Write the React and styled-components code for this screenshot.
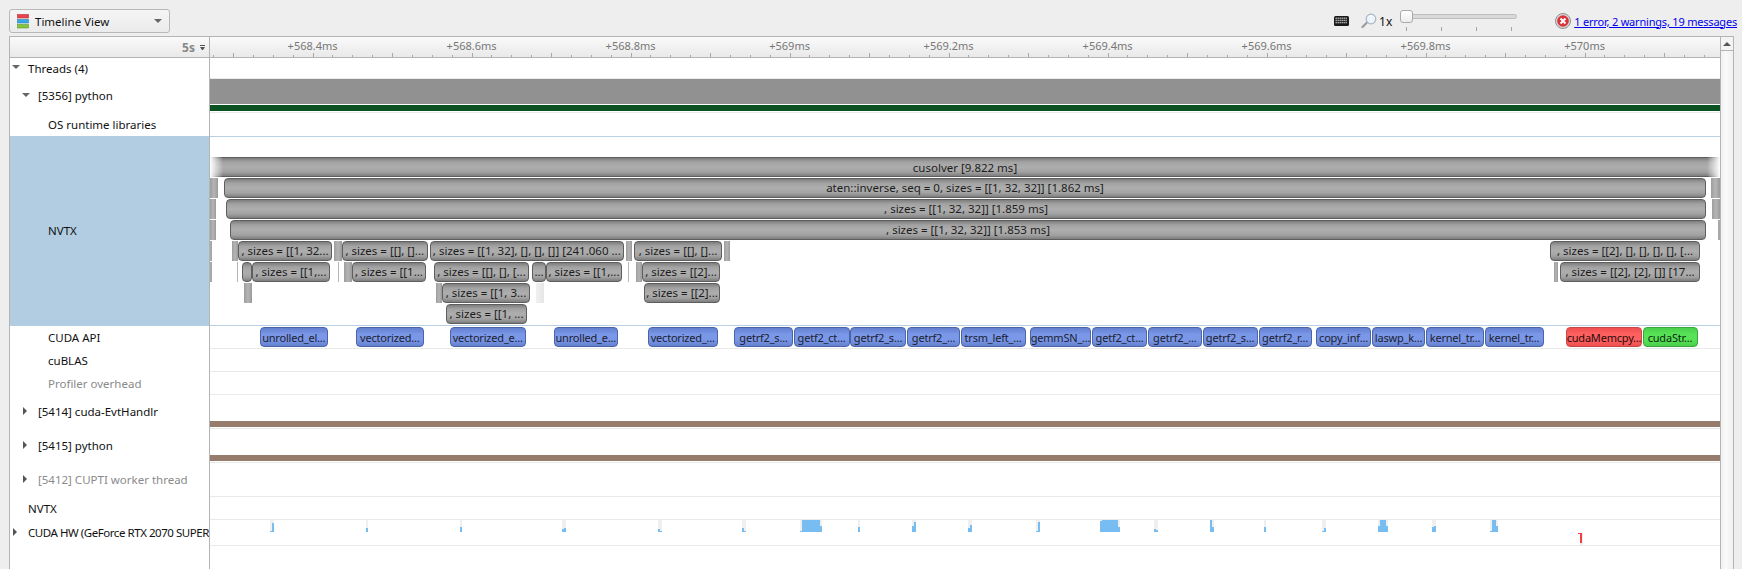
import React from "react";
import styled, { createGlobalStyle } from "styled-components";

const Global = createGlobalStyle`
  html, body { margin: 0; padding: 0; height: 100%; background: #eeeeee; overflow: hidden; }
  body { font-family: "Noto Sans", "Open Sans", sans-serif; font-size: 11.5px; color: #111; }
`;

const Page = styled.div`
  display: flex;
  flex-direction: column;
  width: 1742px;
  height: 569px;
  overflow: hidden;
`;

const Toolbar = styled.div`
  display: flex;
  align-items: flex-start;
  height: 36px;
  padding: 9px 5px 0 9px;
  box-sizing: border-box;
  flex: none;
`;

const Dropdown = styled.div`
  display: flex;
  align-items: center;
  width: 161px;
  height: 24px;
  box-sizing: border-box;
  padding: 0 7px;
  border: 1px solid #b9b9b9;
  border-radius: 3px;
  background: linear-gradient(#f5f5f5, #ebebeb);
`;

const DropText = styled.span`
  margin-left: 6px;
  flex: 1;
  font-size: 11.5px;
`;

const DownTri = styled.span`
  width: 0;
  height: 0;
  border-left: 4px solid transparent;
  border-right: 4px solid transparent;
  border-top: 4px solid #666;
`;

const RightTools = styled.div`
  display: flex;
  align-items: center;
  margin-left: auto;
  height: 24px;
`;

const ZoomLabel = styled.span`
  margin: 0 8px 0 2px;
  font-size: 12px;
  color: #111;
`;

const Slider = styled.div`
  position: relative;
  width: 117px;
  height: 24px;
  margin-right: 38px;
`;

const SliderTrack = styled.div`
  position: absolute;
  left: 0;
  right: 0;
  top: 5px;
  height: 5px;
  border: 1px solid #bdbdbd;
  border-radius: 3px;
  background: #d9d9d9;
  box-sizing: border-box;
`;

const SliderThumb = styled.div`
  position: absolute;
  left: 0;
  top: 1px;
  width: 13px;
  height: 13px;
  box-sizing: border-box;
  border: 1px solid #aaa;
  border-radius: 3px;
  background: linear-gradient(#fff, #ececec);
`;

const SliderTicks = styled.svg`
  position: absolute;
  left: 0;
  top: 18px;
`;

const MessageLink = styled.a`
  margin-left: 3px;
  color: #0000ee;
  text-decoration: underline;
  font-size: 11px;
  letter-spacing: -0.2px;
  white-space: nowrap;
`;

const Panel = styled.div`
  display: flex;
  flex: 1;
  width: 1725px;
  margin-left: 9px;
  box-sizing: border-box;
  border-left: 1px solid #b4b4b4;
  border-top: 1px solid #b4b4b4;
  min-height: 0;
`;

const Main = styled.div`
  display: flex;
  flex-direction: column;
  flex: 1;
  min-width: 0;
`;

const Scrollbar = styled.div`
  width: 14px;
  box-sizing: border-box;
  flex: none;
  border-left: 1px solid #b4b4b4;
  border-right: 1px solid #b4b4b4;
  background: linear-gradient(90deg, #f0f0f0, #fafafa 40%, #f0f0f0);
`;

const ScrollUp = styled.div`
  display: flex;
  align-items: center;
  justify-content: center;
  height: 14px;
  box-sizing: border-box;
  border-bottom: 1px solid #b4b4b4;
  background: #f4f4f4;
  &::before {
    content: "";
    border-left: 4px solid transparent;
    border-right: 4px solid transparent;
    border-bottom: 4px solid #555;
  }
`;

const Row = styled.div`
  display: flex;
  height: ${(p) => p.$h}px;
  flex: none;
`;

const FillRow = styled(Row)`
  height: auto;
  flex: 1;
`;

const Corner = styled.div`
  display: flex;
  align-items: center;
  justify-content: flex-end;
  width: 200px;
  flex: none;
  box-sizing: border-box;
  padding: 0 4px 0 0;
  border-right: 1px solid #b4b4b4;
  border-bottom: 1px solid #b4b4b4;
  background: linear-gradient(#fafafa, #e9e9e9);
  font-weight: 700;
  color: #888;
  font-size: 12px;
`;

const SortGlyph = styled.span`
  display: inline-flex;
  flex-direction: column;
  margin-left: 5px;
  gap: 1px;
  &::before {
    content: "";
    width: 5px;
    height: 1px;
    background: #555;
  }
  &::after {
    content: "";
    border-left: 2.5px solid transparent;
    border-right: 2.5px solid transparent;
    border-top: 3px solid #555;
  }
`;

const Ruler = styled.div`
  position: relative;
  flex: 1;
  border-bottom: 1px solid #b4b4b4;
  background: linear-gradient(#fafafa, #e9e9e9);
`;

const RulerLabel = styled.span.attrs((p) => ({ style: { left: p.$x } }))`
  position: absolute;
  top: 1px;
  transform: translateX(-50%);
  color: #777;
  font-size: 11px;
  white-space: nowrap;
`;

const RulerTicks = styled.svg`
  position: absolute;
  left: 0;
  bottom: 0;
`;

const Label = styled.div`
  display: flex;
  align-items: center;
  width: 200px;
  flex: none;
  box-sizing: border-box;
  padding: 0 0 1px ${(p) => p.$pad}px;
  border-right: 1px solid #b4b4b4;
  background: ${(p) => (p.$selected ? "#b2cce2" : "#fff")};
  color: ${(p) => (p.$muted ? "#8a8a8a" : "#111")};
  letter-spacing: ${(p) => (p.$tight ? "-0.45px" : "0")};
  white-space: nowrap;
  overflow: hidden;
`;

const CaretBox = styled.span`
  display: flex;
  align-items: center;
  width: 16px;
  flex: none;
  margin-top: -2px;
`;

const CaretDown = styled.span`
  width: 0;
  height: 0;
  border-left: 4px solid transparent;
  border-right: 4px solid transparent;
  border-top: 4px solid #666;
`;

const CaretRight = styled.span`
  width: 0;
  height: 0;
  margin-left: 1px;
  border-top: 4px solid transparent;
  border-bottom: 4px solid transparent;
  border-left: 4px solid #555;
`;

const Track = styled.div`
  position: relative;
  flex: 1;
  display: flex;
  flex-direction: column;
  box-sizing: border-box;
  background: #fff;
  border-bottom: 1px solid ${(p) => p.$line || "#e9e9e9"};
`;

const NvtxTrack = styled(Track)`
  border-top: 1px solid #b9cfe2;
`;

const PlainTrack = styled.div`
  flex: 1;
  background: #fff;
`;

const UsageBar = styled.div`
  height: 25px;
  background: #919191;
  flex: none;
`;

const GreenBar = styled.div`
  height: 6px;
  margin-top: 1px;
  background: #0b5323;
  flex: none;
`;

const BrownBar = styled.div`
  height: 6px;
  margin-top: auto;
  margin-bottom: 1px;
  background: #957c6d;
  flex: none;
`;

const barBase = `
  position: absolute;
  height: 20px;
  box-sizing: border-box;
  display: flex;
  align-items: center;
  justify-content: center;
  overflow: hidden;
  white-space: nowrap;
  font-size: 11.5px;
  line-height: 1;
`;

const place = (p) => ({
  style: { left: p.$x - 210, width: p.$w, top: p.$top },
});

const GreyBar = styled.div.attrs(place)`
  ${barBase}
  border: 1px solid #5e5e5e;
  border-radius: 4px;
  color: #1c1c1c;
  background: linear-gradient(#7d7d7d, #a2a2a2 22%, #aeaeae 50%, #a2a2a2 78%, #7d7d7d);
`;

const Stub = styled.div.attrs(place)`
  position: absolute;
  height: 20px;
  background: ${(p) =>
    p.$pale
      ? "linear-gradient(90deg, #f0f0f0, #e6e6e6)"
      : "linear-gradient(90deg, #9d9d9d, #b5b5b5 50%, #9a9a9a)"};
`;

const RootBar = styled.div`
  position: absolute;
  left: 0;
  right: 0;
  top: 20px;
  height: 20px;
  box-sizing: border-box;
  display: flex;
  align-items: center;
  justify-content: center;
  font-size: 11.5px;
  color: #1c1c1c;
  border-top: 1px solid #5e5e5e;
  border-bottom: 1px solid #5e5e5e;
  background: linear-gradient(#7d7d7d, #a2a2a2 22%, #aeaeae 50%, #a2a2a2 78%, #7d7d7d);
  &::before,
  &::after {
    content: "";
    position: absolute;
    top: -1px;
    bottom: -1px;
    width: 13px;
  }
  &::before {
    left: 0;
    background: linear-gradient(90deg, #fff, rgba(255, 255, 255, 0));
  }
  &::after {
    right: 0;
    background: linear-gradient(270deg, #fff, rgba(255, 255, 255, 0));
  }
`;

const palettes = {
  blue: { b: "#4a64a8", c: "#7a97e8", e: "#6480cf", t: "#1c2230" },
  red: { b: "#c54848", c: "#ff6060", e: "#f04f4f", t: "#2a0b0b" },
  green: { b: "#3da43d", c: "#58e258", e: "#4acf4a", t: "#0c2a0c" },
};

const ApiBar = styled.div.attrs(place)`
  ${barBase}
  font-size: 11px;
  letter-spacing: -0.2px;
  border: 1px solid ${(p) => palettes[p.$kind].b};
  border-radius: 4px;
  color: ${(p) => palettes[p.$kind].t};
  background: linear-gradient(
    ${(p) => palettes[p.$kind].e},
    ${(p) => palettes[p.$kind].c} 35%,
    ${(p) => palettes[p.$kind].c} 65%,
    ${(p) => palettes[p.$kind].e}
  );
`;

const Sparks = styled.svg`
  position: absolute;
  left: 0;
  top: 0;
`;

const StackIcon = () => (
  <svg width="12" height="15" viewBox="0 0 12 15">
    <rect x="0.5" y="0.5" width="11" height="3.5" fill="#e8434f" stroke="#b5303a" strokeWidth="0.6" />
    <rect x="0.5" y="5.5" width="11" height="3.5" fill="#39a6e6" stroke="#2a80b5" strokeWidth="0.6" />
    <rect x="0.5" y="10.5" width="11" height="3.5" fill="#83c440" stroke="#5f9a2a" strokeWidth="0.6" />
  </svg>
);

const KeyboardIcon = () => (
  <svg width="15" height="10" viewBox="0 0 15 10" style={{ marginRight: 12 }}>
    <rect width="15" height="10" rx="1.5" fill="#1a1a1a" />
    {[2, 4.2, 6.4].map((y) =>
      [2, 4, 6, 8, 10, 12].map((x) => (
        <rect key={`${x}-${y}`} x={x - 0.5} y={y - 0.5} width="1.4" height="1.4" fill="#b5b5b5" />
      ))
    )}
  </svg>
);

const GlassIcon = () => (
  <svg width="16" height="16" viewBox="0 0 16 16">
    <line x1="5.5" y1="10" x2="1.5" y2="14" stroke="#9b9b9b" strokeWidth="2.2" strokeLinecap="round" />
    <circle cx="10" cy="6" r="4.8" fill="#eef6fc" stroke="#a9b6c2" strokeWidth="1.2" />
    <path d="M7.5 4.5a3 3 0 0 1 3-1.5" stroke="#ffffff" fill="none" />
  </svg>
);

const ErrorIcon = () => (
  <svg width="16" height="16" viewBox="0 0 16 16">
    <circle cx="8" cy="8" r="7.5" fill="#d8d8d8" stroke="#8f8f8f" />
    <circle cx="8" cy="8" r="5.8" fill="#d9323a" />
    <path d="M5.5 5.5l5 5M10.5 5.5l-5 5" stroke="#fff" strokeWidth="1.9" />
  </svg>
);

const times = ["+568.4ms", "+568.6ms", "+568.8ms", "+569ms", "+569.2ms", "+569.4ms", "+569.6ms", "+569.8ms", "+570ms"];

const ticks = [];
for (let i = -5; 102.6 + 19.875 * i < 1510; i++) {
  const major = ((i % 4) + 4) % 4 === 0;
  ticks.push({ x: Math.round(102.6 + 19.875 * i), h: major ? 4 : 2 });
}

const lvl = (n) => 20 + 21 * n;

const greys = [
  [1, 224, 1482, "aten::inverse, seq = 0, sizes = [[1, 32, 32]] [1.862 ms]"],
  [2, 226, 1480, ", sizes = [[1, 32, 32]] [1.859 ms]"],
  [3, 230, 1476, ", sizes = [[1, 32, 32]] [1.853 ms]"],
  [4, 238, 94, ", sizes = [[1, 32..."],
  [4, 342, 85.5, ", sizes = [[], []..."],
  [4, 430, 193.6, ", sizes = [[1, 32], [], [], []] [241.060 ..."],
  [4, 634, 88, ", sizes = [[], []..."],
  [4, 1550, 150, ", sizes = [[2], [], [], [], [], [..."],
  [5, 242, 10, ""],
  [5, 252, 78, ", sizes = [[1,..."],
  [5, 352, 74, ", sizes = [[1..."],
  [5, 434, 95, ", sizes = [[], [], [..."],
  [5, 532, 14, "..."],
  [5, 546, 76, ", sizes = [[1,..."],
  [5, 642, 78, ", sizes = [[2]..."],
  [5, 1560, 140, ", sizes = [[2], [2], []] [17..."],
  [6, 442, 88, ", sizes = [[1, 3..."],
  [6, 644, 76, ", sizes = [[2]..."],
  [7, 446, 81, ", sizes = [[1, ..."],
];

const stubs = [
  [1, 210, 8],
  [1, 1711, 9],
  [2, 210, 6],
  [2, 1712, 8],
  [3, 210, 6],
  [3, 1718, 2],
  [4, 210, 2],
  [4, 232, 6],
  [4, 334, 7.5],
  [4, 626, 6],
  [4, 724, 6],
  [5, 210, 2],
  [5, 237, 1],
  [5, 338, 1],
  [5, 344, 8],
  [5, 628, 1],
  [5, 636, 6],
  [5, 1554, 4],
  [6, 244, 8],
  [6, 436, 6],
];

const apis = [
  [260, 67.5, "unrolled_el...", "blue"],
  [356, 67.5, "vectorized...", "blue"],
  [450, 75.5, "vectorized_e...", "blue"],
  [554, 63.5, "unrolled_e...", "blue"],
  [648, 69.5, "vectorized_...", "blue"],
  [734, 59, "getrf2_s...", "blue"],
  [793.5, 56, "getf2_ct...", "blue"],
  [850, 56, "getrf2_s...", "blue"],
  [907, 53, "getrf2_...", "blue"],
  [960.5, 65, "trsm_left_...", "blue"],
  [1030, 61, "gemmSN_...", "blue"],
  [1092, 55, "getf2_ct...", "blue"],
  [1148, 53.5, "getrf2_...", "blue"],
  [1202.5, 55, "getrf2_s...", "blue"],
  [1258.5, 53, "getrf2_r...", "blue"],
  [1316, 55, "copy_inf...", "blue"],
  [1372, 53, "laswp_k...", "blue"],
  [1426, 58, "kernel_tr...", "blue"],
  [1484.5, 59, "kernel_tr...", "blue"],
  [1566, 76, "cudaMemcpy...", "red"],
  [1642.5, 55, "cudaStr...", "green"],
];

// each spark: start x, then the height of every 2px column
const sparks = [
  [270, [1, 9]],
  [366, [4]],
  [460, [5]],
  [562, [3, 4]],
  [658, [3, 1]],
  [742, [4, 1]],
  [800, [1, 12, 12, 12, 12, 12, 12, 12, 12, 12, 6]],
  [858, [5]],
  [912, [6, 10]],
  [968, [4, 7]],
  [1036, [1, 10]],
  [1100, [11, 12, 12, 12, 12, 12, 12, 12, 12, 5]],
  [1154, [3, 2]],
  [1210, [12, 5]],
  [1264, [5]],
  [1322, [1, 4]],
  [1378, [6, 12, 12, 12, 6]],
  [1432, [5, 6]],
  [1490, [1, 12, 12, 6]],
];

const ToggleLabel = ({ pad, open, muted, tight, children }) => (
  <Label $pad={pad} $muted={muted} $tight={tight}>
    <CaretBox>{open ? <CaretDown /> : <CaretRight />}</CaretBox>
    {children}
  </Label>
);

export default function App() {
  return (
    <Page>
      <Global />
      <Toolbar>
        <Dropdown>
          <StackIcon />
          <DropText>Timeline View</DropText>
          <DownTri />
        </Dropdown>
        <RightTools>
          <KeyboardIcon />
          <GlassIcon />
          <ZoomLabel>1x</ZoomLabel>
          <Slider>
            <SliderTrack />
            <SliderThumb />
            <SliderTicks width="117" height="5" viewBox="0 0 117 5">
              {[6, 41, 76, 111].map((x) => (
                <rect key={x} x={x} y="0" width="1" height="4" fill="#a5a5a5" />
              ))}
            </SliderTicks>
          </Slider>
          <ErrorIcon />
          <MessageLink href="#">1 error, 2 warnings, 19 messages</MessageLink>
        </RightTools>
      </Toolbar>
      <Panel>
        <Main>
          <Row $h={21}>
            <Corner>
              5s
              <SortGlyph />
            </Corner>
            <Ruler>
              {times.map((t, i) => (
                <RulerLabel key={t} $x={102.6 + 159 * i}>
                  {t}
                </RulerLabel>
              ))}
              <RulerTicks width="1510" height="5" viewBox="0 0 1510 5">
                {ticks.map((t) => (
                  <rect key={t.x} x={t.x} y={5 - t.h} width="1" height={t.h} fill="#a8a8a8" />
                ))}
              </RulerTicks>
            </Ruler>
          </Row>
          <Row $h={21}>
            <ToggleLabel pad={2} open>
              Threads (4)
            </ToggleLabel>
            <Track />
          </Row>
          <Row $h={34}>
            <ToggleLabel pad={12} open>
              [5356] python
            </ToggleLabel>
            <Track>
              <UsageBar />
              <GreenBar />
            </Track>
          </Row>
          <Row $h={23}>
            <Label $pad={38}>OS runtime libraries</Label>
            <Track $line="#fff" />
          </Row>
          <Row $h={190}>
            <Label $pad={38} $selected>
              NVTX
            </Label>
            <NvtxTrack $line="#b9cfe2">
              <RootBar>cusolver [9.822 ms]</RootBar>
              {stubs.map(([l, x, w]) => (
                <Stub key={`${l}-${x}`} $x={x} $w={w} $top={lvl(l)} />
              ))}
              <Stub $x={536} $w={7.5} $top={lvl(6)} $pale />
              {greys.map(([l, x, w, t]) => (
                <GreyBar key={`${l}-${x}`} $x={x} $w={w} $top={lvl(l)}>
                  {t}
                </GreyBar>
              ))}
            </NvtxTrack>
          </Row>
          <Row $h={23}>
            <Label $pad={38}>CUDA API</Label>
            <Track>
              {apis.map(([x, w, t, k]) => (
                <ApiBar key={x} $x={x} $w={w} $top={1} $kind={k}>
                  {t}
                </ApiBar>
              ))}
            </Track>
          </Row>
          <Row $h={23}>
            <Label $pad={38}>cuBLAS</Label>
            <Track />
          </Row>
          <Row $h={23}>
            <Label $pad={38} $muted>
              Profiler overhead
            </Label>
            <Track />
          </Row>
          <Row $h={34}>
            <ToggleLabel pad={12}>[5414] cuda-EvtHandlr</ToggleLabel>
            <Track>
              <BrownBar />
            </Track>
          </Row>
          <Row $h={34}>
            <ToggleLabel pad={12}>[5415] python</ToggleLabel>
            <Track>
              <BrownBar />
            </Track>
          </Row>
          <Row $h={34}>
            <ToggleLabel pad={12} muted>
              [5412] CUPTI worker thread
            </ToggleLabel>
            <Track />
          </Row>
          <Row $h={23}>
            <Label $pad={18}>NVTX</Label>
            <Track />
          </Row>
          <Row $h={26}>
            <ToggleLabel pad={2} tight>
              CUDA HW (GeForce RTX 2070 SUPER)
            </ToggleLabel>
            <Track>
              <Sparks width="1510" height="25" viewBox="0 0 1510 25">
                {sparks.map(([x, cols]) => (
                  <g key={x}>
                    <rect x={x - 210} y="0" width={cols.length * 2} height="12" fill="#efefef" />
                    {cols.map((h, i) => (
                      <rect key={i} x={x - 210 + i * 2} y={12 - h} width="2" height={h} fill="#78bdf2" />
                    ))}
                  </g>
                ))}
                <rect x="1370" y="13" width="3" height="12" fill="#efefef" />
                <rect x="1368" y="13" width="2" height="1" fill="#f04040" />
                <rect x="1370" y="13" width="2" height="10" fill="#f04040" />
              </Sparks>
            </Track>
          </Row>
          <FillRow>
            <Label $pad={0} />
            <PlainTrack />
          </FillRow>
        </Main>
        <Scrollbar>
          <ScrollUp />
        </Scrollbar>
      </Panel>
    </Page>
  );
}
